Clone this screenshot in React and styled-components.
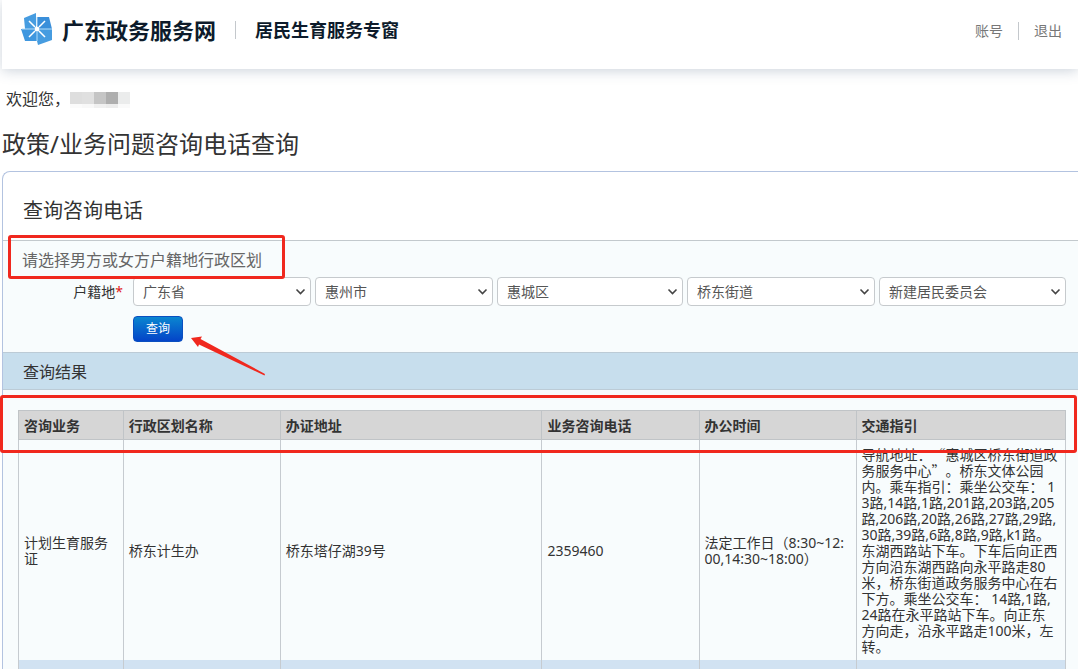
import React, { Fragment } from "react";
import styled, { createGlobalStyle } from "styled-components";

const GlobalStyle = createGlobalStyle`
  *, *::before, *::after { box-sizing: border-box; }
  body {
    margin: 0;
    background: #fff;
    color: #333;
    font: 14px/16px "Noto Sans", "Noto Sans CJK SC", sans-serif;
    text-spacing-trim: space-all;
  }
`;

const Page = styled.div`
  min-height: 100vh;
  padding-left: 2px;
  overflow: hidden;
`;

const Header = styled.header`
  display: flex;
  align-items: flex-start;
  justify-content: space-between;
  height: 69px;
  padding: 13px 16px 0 19px;
  background: #fff;
  box-shadow: 0 2px 12px rgba(60, 90, 120, 0.26);
`;

const Brand = styled.div`
  display: flex;
  align-items: center;
  height: 34px;
`;

const Logo = styled.svg`
  width: 32px;
  height: 34px;
  margin-right: 9px;
`;

const SiteName = styled.span`
  font-size: 22px;
  line-height: 34px;
  font-weight: 700;
  color: #0d1b2b;
`;

const PortalName = styled.span`
  font-size: 18px;
  line-height: 34px;
  font-weight: 700;
  color: #0d1b2b;
`;

const Divider = styled.span`
  width: 1px;
  height: 18px;
  margin: 0 ${(p) => p.$gap}px;
  background: #c4c8cc;
`;

const Account = styled.nav`
  display: flex;
  align-items: center;
  height: 36px;
`;

const AccountLink = styled.a`
  color: #777;
  text-decoration: none;
`;

const Welcome = styled.p`
  display: flex;
  margin: 18px 0 15px 4px;
  font-size: 16px;
  line-height: 24px;
`;

const MaskedName = styled.span`
  display: grid;
  grid-template-columns: repeat(5, 12px);
  grid-template-rows: 12px 4px;
  margin-top: 5px;
`;

const MaskCell = styled.span`
  background: ${(p) => p.$tone};
`;

const PageTitle = styled.h1`
  margin: 0 0 9px;
  font-size: 24px;
  line-height: 36px;
  font-weight: 400;
`;

const Panel = styled.main`
  border: 1px solid #b3c3e0;
  border-width: 1px 0 0 1px;
  border-top-left-radius: 8px;
`;

const PanelTitle = styled.h2`
  margin: 0;
  padding: 24px 20px 14px;
  border-bottom: 1px solid #c3c9cd;
  font-size: 20px;
  line-height: 30px;
  font-weight: 400;
`;

const SearchForm = styled.form`
  padding: 7px 12px 10px 0;
  background: #f8fcfd;
`;

const Hint = styled.p`
  position: relative;
  width: fit-content;
  margin: 0 0 5px 19px;
  font-size: 16px;
  line-height: 24px;
  color: #666;

  &::after {
    content: "";
    position: absolute;
    z-index: 2;
    inset: -13px -23px -7px -14px;
    border: 3px solid #f0281e;
    border-radius: 3px;
  }
`;

const FormGrid = styled.div`
  display: grid;
  grid-template-columns: 120px 1fr;
  column-gap: 10px;
  row-gap: 10px;
`;

const FieldLabel = styled.label`
  text-align: right;
  line-height: 29px;
`;

const Required = styled.span`
  color: #e02020;
`;

const Regions = styled.div`
  display: grid;
  grid-template-columns: 178fr 178fr 186fr 188fr 187fr;
  gap: 4px;
`;

const SelectBox = styled.div`
  position: relative;
`;

const Select = styled.select`
  appearance: none;
  display: block;
  width: 100%;
  height: 29px;
  padding: 0 24px 0 9px;
  border: 1px solid #c6cacd;
  border-radius: 4px;
  background: #fff;
  color: #555;
  font: inherit;
`;

const Chevron = styled.svg`
  position: absolute;
  right: 5px;
  top: 11px;
  width: 11px;
  height: 8px;
  pointer-events: none;
`;

const Actions = styled.div`
  position: relative;
  grid-column: 2;
  display: flex;
`;

const SubmitButton = styled.button`
  width: 50px;
  height: 26px;
  padding: 0;
  border: 1px solid #0a4fc0;
  border-radius: 4px;
  background: linear-gradient(#0a86d0, #0444c8);
  color: #fff;
  font: 12px/24px "Noto Sans", "Noto Sans CJK SC", sans-serif;
`;

const Arrow = styled.svg`
  position: absolute;
  left: 57px;
  top: 19px;
  width: 77px;
  height: 42px;
  z-index: 2;
`;

const ResultTitle = styled.h3`
  margin: 0;
  padding-left: 20px;
  border: solid #bccbd6;
  border-width: 1px 0;
  background: #c7deed;
  font-size: 16px;
  line-height: 38px;
  height: 38px;
  font-weight: 400;
`;

const Results = styled.section`
  position: relative;
  padding: 20px 12px 0 15px;
  background: #f8fcfd;

  &::after {
    content: "";
    position: absolute;
    z-index: 2;
    top: 5px;
    left: -3px;
    right: 1px;
    height: 58px;
    border: 3px solid #f0281e;
    border-radius: 3px;
  }
`;

const Table = styled.table`
  width: 100%;
  table-layout: fixed;
  border-collapse: collapse;
`;

const HeadCell = styled.th`
  width: ${(p) => p.$width};
  height: 29px;
  padding: 2px 5px 0;
  border: 1px solid #c0c4c7;
  background: #d6d6d6;
  text-align: left;
`;

const Cell = styled.td`
  padding: 7px 5px 5px;
  border: 1px solid #c6cbd0;
  border-width: 0 1px;
  white-space: nowrap;
`;

const NextRow = styled.tr`
  height: 9px;
  background: #d1e2f2;

  td { padding: 0; }
`;

const Quote = styled.span`
  font-family: "Noto Sans CJK SC", sans-serif;
  line-height: 0;
`;

const maskTones = [
  "#dedede", "#e0e0e0", "#c5c5c5", "#aeaeae", "#ebecec",
  "#fbfbfb", "#f8f8f8", "#f0f0f0", "#ececec", "#fafafa",
];

const regions = [
  ["省", "广东省"],
  ["市", "惠州市"],
  ["区", "惠城区"],
  ["街道", "桥东街道"],
  ["居委会", "新建居民委员会"],
];

const columns = [
  ["咨询业务", "10%"],
  ["行政区划名称", "15%"],
  ["办证地址", "25%"],
  ["业务咨询电话", "15%"],
  ["办公时间", "15%"],
  ["交通指引", "20%"],
];

const record = [
  ["计划生育服务", "证"],
  ["桥东计生办"],
  ["桥东塔仔湖39号"],
  ["2359460"],
  ["法定工作日（8:30~12:", "00,14:30~18:00）"],
  [
    <>导航地址：<Quote>“</Quote>惠城区桥东街道政</>,
    <>务服务中心<Quote>”</Quote>。桥东文体公园</>,
    "内。乘车指引：乘坐公交车： 1",
    "3路,14路,1路,201路,203路,205",
    "路,206路,20路,26路,27路,29路,",
    "30路,39路,6路,8路,9路,k1路。",
    "东湖西路站下车。下车后向正西",
    "方向沿东湖西路向永平路走80",
    "米，桥东街道政务服务中心在右",
    "下方。乘坐公交车： 14路,1路,",
    "24路在永平路站下车。向正东",
    "方向走，沿永平路走100米，左",
    "转。",
  ],
];

function Lines({ lines }) {
  return lines.map((line, i) => (
    <Fragment key={i}>
      {i > 0 && <br />}
      {line}
    </Fragment>
  ));
}

function RegionSelect({ id, label, value }) {
  return (
    <SelectBox>
      <Select id={id} aria-label={label} defaultValue={value}>
        <option>{value}</option>
      </Select>
      <Chevron viewBox="0 0 11 8" aria-hidden="true">
        <path d="M1.5 1.5 5.5 5.5 9.5 1.5" fill="none" stroke="#444" strokeWidth="1.6" />
      </Chevron>
    </SelectBox>
  );
}

export default function App() {
  return (
    <>
      <GlobalStyle />
      <Page>
        <Header>
          <Brand>
            <Logo viewBox="0 0 32 34" aria-hidden="true">
              <path d="M3 5 15 0V16H4Z" fill="#469ce0" />
              <path d="M16 4H28L31 16H16Z" fill="#3a8fda" />
              <path d="M16 16H31V27L17 32 16 28Z" fill="#469ce0" />
              <path d="M0 16H16V28H4Z" fill="#3f97df" />
              <path d="M16 4V13M16 19V28M1 16H13M19 16H31" stroke="#b4dcf8" strokeWidth="1" />
              <path
                d="M8 8 14 14M24 8 18 14M8 24 14 18M24 24 18 18"
                stroke="#fff"
                strokeWidth="1.5"
              />
              <circle cx="16" cy="16" r="2.5" fill="#fff" />
            </Logo>
            <SiteName>广东政务服务网</SiteName>
            <Divider $gap={19} />
            <PortalName>居民生育服务专窗</PortalName>
          </Brand>
          <Account>
            <AccountLink href="#account">账号</AccountLink>
            <Divider $gap={15} />
            <AccountLink href="#logout">退出</AccountLink>
          </Account>
        </Header>

        <Welcome>
          欢迎您，
          <MaskedName>
            {maskTones.map((tone, i) => (
              <MaskCell key={i} $tone={tone} />
            ))}
          </MaskedName>
        </Welcome>
        <PageTitle>政策/业务问题咨询电话查询</PageTitle>

        <Panel>
          <PanelTitle>查询咨询电话</PanelTitle>
          <SearchForm onSubmit={(e) => e.preventDefault()}>
            <Hint>请选择男方或女方户籍地行政区划</Hint>
            <FormGrid>
              <FieldLabel htmlFor="region-0">
                户籍地<Required>*</Required>
              </FieldLabel>
              <Regions>
                {regions.map(([label, value], i) => (
                  <RegionSelect key={label} id={`region-${i}`} label={label} value={value} />
                ))}
              </Regions>
              <Actions>
                <SubmitButton type="submit">查询</SubmitButton>
                <Arrow viewBox="0 0 77 42" aria-hidden="true">
                  <path d="M1 3 12 1.500 10.500 4 75 39 74.500 40.500 9 9.500 8 12Z" fill="#f0281e" />
                </Arrow>
              </Actions>
            </FormGrid>
          </SearchForm>

          <ResultTitle>查询结果</ResultTitle>
          <Results>
            <Table>
              <thead>
                <tr>
                  {columns.map(([name, width]) => (
                    <HeadCell key={name} $width={width} scope="col">
                      {name}
                    </HeadCell>
                  ))}
                </tr>
              </thead>
              <tbody>
                <tr>
                  {record.map((lines, i) => (
                    <Cell key={i}>
                      <Lines lines={lines} />
                    </Cell>
                  ))}
                </tr>
                <NextRow>
                  {columns.map(([name]) => (
                    <Cell key={name} />
                  ))}
                </NextRow>
              </tbody>
            </Table>
          </Results>
        </Panel>
      </Page>
    </>
  );
}
